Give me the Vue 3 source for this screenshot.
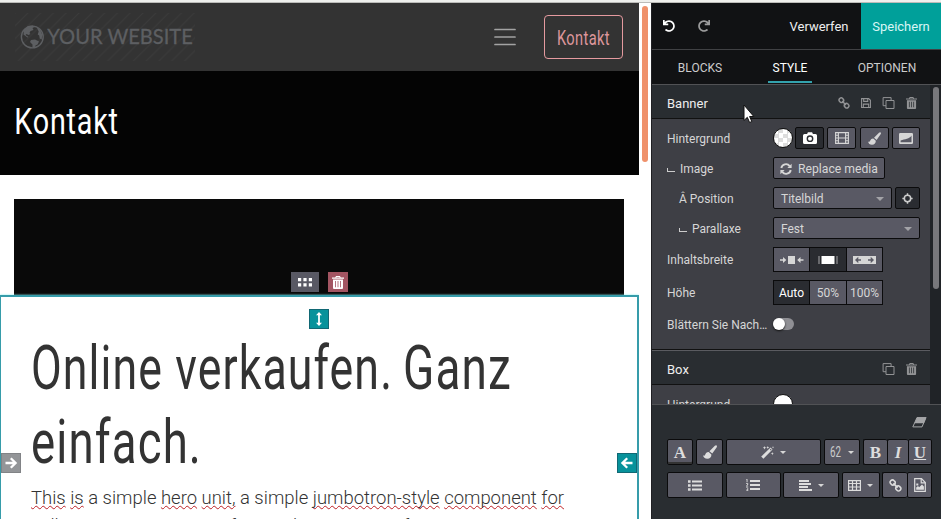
<script setup>
import { h } from 'vue'

const shapes = {
  undo: { box: '0 0 512 512', fill: ['M212.333 224.333H12c-6.627 0-12-5.373-12-12V12C0 5.373 5.373 0 12 0h48c6.627 0 12 5.373 12 12v78.112C117.773 39.279 184.26 7.47 258.175 8.007c136.906.994 246.448 111.623 246.157 248.532C504.041 393.258 393.12 504 256.333 504c-64.089 0-122.496-24.313-166.51-64.215-5.099-4.622-5.334-12.554-.467-17.42l33.967-33.967c4.474-4.474 11.662-4.717 16.401-.525C170.76 415.336 211.58 432 256.333 432c97.268 0 176-78.716 176-176 0-97.267-78.716-176-176-176-58.496 0-110.28 28.476-142.274 72.333h98.274c6.627 0 12 5.373 12 12v48c0 6.627-5.373 12-12 12z'] },
  link: { box: '0 0 14 14', line: ['M5.2 1.6 6.2 2.600a1.900 1.900 0 0 1 0 2.700l-.7.7a1.900 1.900 0 0 1-2.700 0L1.700 4.900a1.900 1.900 0 0 1 0-2.700l.7-.7a1.900 1.900 0 0 1 2.800.1z', 'M11.300 8 12.300 9a1.900 1.900 0 0 1 0 2.700l-.7.7a1.900 1.900 0 0 1-2.700 0L7.800 11.300a1.900 1.900 0 0 1 0-2.700l.7-.7a1.900 1.900 0 0 1 2.800.1z', 'M4.700 4.700 9.300 9.300'], w: 1.700 },
  save: { box: '0 0 12 12', line: ['M.7.7h8.500l2.100 2.100v8.500H.7z', 'M3.200.7v3.300h4.900V.7', 'M2.800 11.300V7.300h6.400v4'], w: 1.3 },
  copy: { box: '0 0 12 12', line: ['M3.500 3.500h8v8h-8z', 'M3.500 8.700H.6V.6h8v2.900'], w: 1 },
  trash: { box: '0 0 12 13', fill: ['M4 0h4l.7 1.6H12v1.200H0V1.600h3.300zM4.600 1l-.3.6h3.400L7.400 1zM1 3.400h10V12a1 1 0 0 1-1 1H2a1 1 0 0 1-1-1zM3.200 5v6.200h.8V5zm2.400 0v6.200h.8V5zM8 5v6.200h.8V5z'] },
  camera: { box: '0 0 14 12', fill: ['M1.5 2h2.600l.8-1.700h4.200L9.900 2h2.600A1.500 1.500 0 0 1 14 3.500v7A1.500 1.500 0 0 1 12.500 12h-11A1.500 1.500 0 0 1 0 10.500v-7A1.500 1.500 0 0 1 1.500 2zM7 3.300a3.400 3.400 0 1 0 0 6.800 3.400 3.400 0 0 0 0-6.800zM7 4.700a2 2 0 1 1 0 4 2 2 0 0 1 0-4z'] },
  film: { box: '0 0 14 12', line: ['M.6.6h12.800v10.800H.6z', 'M3.400.6v10.800M10.600.6v10.800M3.400 6h7.200M.6 3.300h2.800M.6 6h2.800M.6 8.700h2.800M10.600 3.300h2.800M10.600 6h2.800M10.600 8.700h2.800'], w: 1.1 },
  brush: { box: '0 0 13 13', fill: ['M12.600.4c.6.6.4 1.300 0 1.900L8.600 8 6 5.800 11 .8c.5-.5 1.100-.8 1.600-.4zM5.300 6.500l2.500 2.300c.2 2.200-1.400 4-3.800 4-2.200 0-3.700-1.300-3.900-3.300.8.6 1.500.5 1.900-.4.500-1.400 1.500-2.700 3.300-2.600z'] },
  contrast: { box: '0 0 14 11', fill: ['M1.200 0h11.600A1.200 1.200 0 0 1 14 1.200v8.600a1.200 1.200 0 0 1-1.200 1.200H1.200A1.200 1.200 0 0 1 0 9.800V1.200A1.200 1.200 0 0 1 1.200 0zM12.500 2.500 C10.500 6 6 6 1.600 7.600V9.300H12.500z'] },
  sync: { box: '0 0 12 12', line: ['M1.300 5A4.700 4.700 0 0 1 9.700 3.100', 'M10.700 7A4.700 4.700 0 0 1 2.300 8.900'], fill: ['M11.600.7v4.200H7.400z', 'M.4 11.300V7.100h4.200z'], w: 1.900 },
  target: { box: '0 0 12 12', line: ['M6 2.500a3.500 3.500 0 1 0 0 7 3.500 3.500 0 0 0 0-7z', 'M6 .4v3M6 8.600v3M.4 6h3M8.600 6h3'], w: 1.600 },
  narrow: { box: '0 0 24 8', fill: ['M8 0h7v8H8zM0 3.200h3V1L6.300 4 3 7V4.800H0zM23.500 3.200h-3V1l-3.300 3 3.300 3V4.800h3z'] },
  medium: { box: '0 0 20 8', fill: ['M3.500 0h13v8h-13z'], line: ['M1 0v8M19 0v8'], w: .6 },
  wide: { box: '0 0 23 8', fill: ['M0 0h23v8H0zM2 4l3.300 3.200V4.800H8V3.200H5.300V.8zM21 4 17.700.8v2.400H15v1.600h2.700v2.400z'] },
  eraser: { box: '0 0 15 11', line: ['M5 .6h9L10 9.900H.8z'], fill: ['M5 .3h9.400L12 6.300H2.400z'], w: 1 },
  wand: { box: '0 0 13 13', fill: ['M9.600 1.500l1.900 1.900L2.400 12.800.2 10.600zM8.900 3.600l.9.900.8-.9-.9-.9zM3.500 0l.5 1.300 1.300.5L4 2.300l-.5 1.300L3 2.300l-1.300-.5L3 1.300zM11.300 6l.4 1.200 1.200.4-1.200.4-.4 1.200-.4-1.200-1.200-.4 1.200-.4zM12 0l.3.900.9.3-.9.3-.3.900-.3-.9-.9-.3.900-.3zM6.800.1l.4 1 1 .4-1 .4-.4 1-.4-1-1-.4 1-.4z'] },
  ul: { box: '0 0 14 11', fill: ['M0 .3h2.600v2.400H0zM0 4.300h2.600v2.400H0zM0 8.300h2.600v2.400H0zM4 .6h10v1.800H4zM4 4.600h10v1.800H4zM4 8.600h10v1.800H4z'] },
  ol: { box: '0 0 14 12', fill: ['M1.500 0v3.300H.6V1H0V.5zM0 4.300h2.200v1.500L1.100 7h1.100v.6H0V7l1.200-1.300V5H0zM0 8.400h2.200V12H0v-.6h1.400v-.9H.4V10h1V9H0zM4 1h10v2H4zM4 5h10v2H4zM4 9h10v2H4z'] },
  align: { box: '0 0 13 11', fill: ['M0 0h10v2H0zM0 3h12v2H0zM0 6h9v2H0zM0 9h13v2H0z'] },
  table: { box: '0 0 13 11', line: ['M.6.6h11.800v9.800H.6zM.6 3.500h11.800M.6 7h11.800M4.500.6v9.800M8.500.6v9.800'], w: 1.200 },
  file: { box: '0 0 12 14', line: ['M.7.700h6.800L11.300 4.500v8.800H.7z', 'M7.200.9v4h4'], fill: ['M2.200 11.700V9.500L4 8l1.200 1.200L8 6.500l1.900 2v3.200z', 'M2.300 5.500h2v2h-2z'], w: 1.200 },
  dots: { box: '0 0 14 9', fill: ['M0 0h3.200v3.200H0zM5.400 0h3.200v3.200H5.400zM10.800 0H14v3.200h-3.200zM0 5.300h3.200v3.200H0zM5.400 5.300h3.200v3.200H5.400zM10.800 5.300H14v3.200h-3.200z'] },
  updown: { box: '0 0 8 14', fill: ['M4 0l3 3.300H4.900v7.400H7L4 14 1 10.700h2.100V3.300H1z'] },
  arrow: { box: '0 0 12 12', line: ['M.5 6h9.800M5.800 1.200 10.600 6l-4.800 4.800'], w: 2.300 }
}

const Icon = ({ name, w, h: height }) => {
  const s = shapes[name]
  return h('svg', { class: 'icon', viewBox: s.box, width: w, height: height, 'aria-hidden': 'true' }, [
    ...(s.line || []).map(d => h('path', { d, fill: 'none', stroke: 'currentColor', 'stroke-width': s.w })),
    ...(s.fill || []).map(d => h('path', { d, fill: 'currentColor', 'fill-rule': 'evenodd' }))
  ])
}
Icon.props = ['name', 'w', 'h']
</script>

<template>
  <div class="window">
    <div class="edge"></div>
    <div class="editor">
      <main class="page">
        <header class="nav">
          <svg class="logo" width="180" height="48" viewBox="0 0 180 48">
            <defs>
              <pattern id="stripes" width="12.800" height="12.800" patternUnits="userSpaceOnUse">
                <path d="M-1 13.800 13.800-1M-1 1 1-1M11.800 13.800l2-2" stroke="#3b3b3b" stroke-width="1" />
              </pattern>
            </defs>
            <rect width="180" height="48" fill="url(#stripes)" />
            <circle cx="17.300" cy="24" r="10.900" fill="none" stroke="#5d5f62" stroke-width="1.400" />
            <path d="M9 17l4-4 5-.5 1.500 1.500-2 1 1 2-3 1-1 2 1 1-2 1-2-1-1 1 3 2-1 .5-4-3zM16 27l4-.5 4 2-1.500 3-2 1-1 2.500-2-.5v-3l-2.500-2.500zM22 15l3 1.500 2.200 5-.5 5-2-1-.5-3-1.500-1 1-3z" fill="#5d5f62" />
            <text x="32.300" y="31" textLength="145.500" lengthAdjust="spacingAndGlyphs">YOUR WEBSITE</text>
          </svg>
          <svg class="burger" width="22" height="18" viewBox="0 0 22 18"><path d="M1 1.500h20M1 9h20M1 16.500h20" stroke="#a3a3a3" stroke-width="1.700" stroke-linecap="round" /></svg>
          <div class="contact">
            <svg width="54" height="26"><text x="0" y="21" textLength="53" lengthAdjust="spacingAndGlyphs">Kontakt</text></svg>
          </div>
        </header>
        <section class="hero">
          <svg width="120" height="50"><text x=".3" y="36" textLength="104.500" lengthAdjust="spacingAndGlyphs">Kontakt</text></svg>
        </section>
        <section class="cover">
          <button class="tool move"><Icon name="dots" w="14" h="9" /></button>
          <button class="tool remove"><Icon name="trash" w="12" h="13" /></button>
        </section>
        <section class="block">
          <svg class="title" width="540" height="149">
            <text x="-1" y="57.500" textLength="362" lengthAdjust="spacingAndGlyphs">Online verkaufen.</text>
            <text x="371" y="57.500" textLength="109" lengthAdjust="spacingAndGlyphs">Ganz</text>
            <text x="-1" y="131.500" textLength="171" lengthAdjust="spacingAndGlyphs">einfach.</text>
          </svg>
          <p><u>This</u> <u>is</u> a simple <u>hero</u> <u>unit,</u> a simple <u>jumbotron-style</u> <u>component</u> <u>for</u><br>calling extra attention to featured content or information.</p>
          <span class="handle top"><Icon name="updown" w="8" h="14" /></span>
          <span class="handle left"><Icon name="arrow" w="12" h="12" /></span>
          <span class="handle right"><Icon name="arrow" w="12" h="12" /></span>
        </section>
      </main>
      <div class="gutter"><i></i></div>
      <aside class="panel">
        <div class="actions">
          <button class="undo"><Icon name="undo" w="12" h="12" /></button>
          <button class="redo"><Icon name="undo" w="12" h="12" /></button>
          <button class="discard">Verwerfen</button>
          <button class="store">Speichern</button>
        </div>
        <nav class="tabs"><a class="t1">BLOCKS</a><a class="t2">STYLE</a><a class="t3">OPTIONEN</a></nav>
        <div class="options">
          <div class="list">
            <div class="head">
              <b>Banner</b>
              <Icon name="link" w="12" h="12" /><Icon name="save" w="10" h="10" /><Icon name="copy" w="13" h="12" /><Icon name="trash" w="11" h="12" />
            </div>
            <div class="rows">
              <div class="row"><label>Hintergrund</label>
                <span class="swatch checker"></span>
                <div class="media"><button class="on"><Icon name="camera" w="14" h="12" /></button><button><Icon name="film" w="14" h="12" /></button><button><Icon name="brush" w="13" h="13" /></button><button><Icon name="contrast" w="14" h="11" /></button></div>
              </div>
              <div class="row"><label><em></em>Image</label><button class="replace"><Icon name="sync" w="12" h="12" />Replace media</button></div>
              <div class="row"><label class="sub">Â Position</label><button class="select short">Titelbild<i class="caret"></i></button><button class="on aim"><Icon name="target" w="11" h="11" /></button></div>
              <div class="row"><label class="sub"><em></em>Parallaxe</label><button class="select long">Fest<i class="caret"></i></button></div>
              <div class="row tall"><label>Inhaltsbreite</label><div class="group"><button><Icon name="narrow" w="24" h="8" /></button><button class="on"><Icon name="medium" w="20" h="8" /></button><button><Icon name="wide" w="23" h="8" /></button></div></div>
              <div class="row tall"><label>Höhe</label><div class="group"><button class="on">Auto</button><button>50%</button><button>100%</button></div></div>
              <div class="row"><label>Blättern Sie Nach…</label><span class="switch"></span></div>
            </div>
            <div class="head second"><b>Box</b><Icon name="copy" w="13" h="12" /><Icon name="trash" w="11" h="12" /></div>
            <div class="rows next"><div class="row"><label>Hintergrund</label><span class="swatch"></span></div></div>
          </div>
          <div class="track"><i></i></div>
        </div>
        <div class="format">
          <div class="clear"><Icon name="eraser" w="15" h="11" /></div>
          <div class="bar one">
            <button class="serif color">A</button><button><Icon name="brush" w="14" h="14" /></button>
            <button><Icon name="wand" w="13" h="13" /><i class="caret"></i></button>
            <button class="size"><svg width="12" height="18"><text x="0" y="14" textLength="11" lengthAdjust="spacingAndGlyphs">62</text></svg><i class="caret"></i></button>
            <div class="joined biu"><button class="serif">B</button><button class="serif it">I</button><button class="serif un">U</button></div>
          </div>
          <div class="bar two">
            <button><Icon name="ul" w="14" h="11" /></button><button><Icon name="ol" w="14" h="12" /></button>
            <button><Icon name="align" w="13" h="11" /><i class="caret"></i></button>
            <button><Icon name="table" w="13" h="11" /><i class="caret"></i></button>
            <div class="joined lf"><button><Icon name="link" w="13" h="13" /></button><button><Icon name="file" w="12" h="14" /></button></div>
          </div>
        </div>
      </aside>
    </div>
    <svg class="pointer" width="12" height="20" viewBox="0 0 12 20"><path d="M1 1v15.500l3.300-3.200 2.300 5.200 2.200-1-2.200-5h4.200z" fill="#fff" stroke="#111" stroke-width="1" /></svg>
  </div>
</template>

<style>
body { overflow: hidden; }
</style>
<style scoped>
* { box-sizing: border-box; }
svg { overflow: visible; }
.window { position: relative; width: 941px; height: 519px; overflow: hidden; font: 12px Roboto, sans-serif; background: #fff; }
.edge { height: 3px; background: #eff0ed; border-bottom: 1px solid #bcbcb9; }
.editor { display: flex; height: 516px; }
button { font: inherit; color: #d6d6d6; padding: 0; margin: 0; border: 0; background: none; display: flex; align-items: center; justify-content: center; }
.icon { display: block; flex: none; }
.page { width: 639px; height: 516px; overflow: hidden; background: #fff; }
.nav { height: 68px; background: #333; display: flex; align-items: center; padding: 0 16px 0 15px; }
.logo text { font: 21px Lato, sans-serif; fill: #5d5f62; stroke: #5d5f62; stroke-width: .3px; }
.burger { margin-left: 299px; }
.contact { margin-left: auto; width: 79px; height: 44px; border: 1px solid #e59a9f; border-radius: 4px; display: flex; align-items: center; justify-content: center; }
.contact text { font: 19.500px Roboto, sans-serif; fill: #dd969b; letter-spacing: .5px; }
.hero { height: 104px; background: #040404; padding: 27px 14px; }
.hero text { font: 37px Roboto, sans-serif; fill: #fff; letter-spacing: 1px; }
.cover { margin: 24px 15px 0 14px; height: 96px; background: #090909; display: flex; justify-content: center; align-items: flex-end; gap: 9px; padding: 0 0 3px 1px; }
.tool { height: 20px; color: #fff; }
.move { width: 28px; background: #595964; }
.remove { width: 20px; background: #a35562; }
.block { position: relative; height: 240px; border: 2px solid #369caa; border-bottom: 0; border-left-width: 1px; padding: 34px 30px 0 31px; box-shadow: 0 0 2px #8ee; background: #fff; }
.title { display: block; }
.title text { font: 400 61px Roboto, sans-serif; fill: #333; letter-spacing: 1.500px; }
p { margin: 4px 0 0 -1px; font-size: 18.480px; font-weight: 300; line-height: 28px; color: #333; white-space: nowrap; }
u { text-decoration: underline wavy #bd2026 1px; text-underline-offset: 1px; text-decoration-skip-ink: none; }
.handle { position: absolute; width: 20px; height: 20px; display: flex; align-items: center; justify-content: center; color: #fff; background: #07929b; border: 1px solid #116874; }
.top { left: 308px; top: 12px; }
.left { left: 0; top: 156px; background: #939598; border-color: #818386; }
.right { right: 0; top: 156px; }
.right .icon { transform: scaleX(-1); }
.gutter { width: 12px; padding: 3px 0 0 3px; background: #fff; }
.gutter i { display: block; width: 6px; height: 156px; border-radius: 3px; background: #ef916b; }
.panel { width: 290px; height: 516px; background: #292d31; color: #d6d6d6; border-left: 1px solid #202024; }
.actions { height: 47px; background: #111214; display: flex; border-bottom: 1px solid #404144; }
.actions button { font-size: 13px; }
.undo { width: 33px; }
.actions .undo { color: #fff; }
.redo { width: 38px; }
.redo .icon { transform: scaleX(-1); opacity: .7; }
.actions .discard { margin-left: auto; width: 84px; color: #eee; }
.actions .store { width: 80px; height: 46px; background: #00a09a; color: #d8f6f5; }
.tabs { height: 35px; background: #111214; border-bottom: 1px solid #515255; display: flex; color: #ccc; line-height: 37px; }
.tabs a { text-align: center; }
.t1 { width: 96px; }
.t2 { width: 44px; margin: 0 36px 0 20px; color: #fff; border-bottom: 2px solid #33a2ad; height: 33px; }
.t3 { width: 78px; }
.options { height: 319px; display: flex; overflow: hidden; }
.list { width: 278px; }
.head { height: 34px; display: flex; align-items: center; background: #292d31; border-bottom: 1px solid #111; padding: 3px 13px 0 15px; gap: 11px; color: #929395; }
.head b { font-size: 13px; font-weight: 400; color: #eee; margin-right: auto; }
.head.second { border-top: 1px solid #5a5b60; height: 35px; }
.rows { height: 231px; background: #3e3f45; padding: 4px 0 0 15px; border-bottom: 1px solid #111; }
.rows.next { padding-top: 4px; height: 60px; }
.row { height: 30px; display: flex; align-items: center; }
.row.tall { height: 33px; }
.row label { width: 106px; white-space: nowrap; padding-top: 1px; }
.row .sub { padding-left: 12px; }
em { display: inline-block; width: 8px; height: 4px; border-left: 1px solid #ccc; border-bottom: 1px solid #ccc; margin-right: 5px; vertical-align: 1px; }
.row button, .bar button { border: 1px solid #0b0b0c; background: #595964; height: 22px; border-radius: 2px; }
.row button.on { background: #2a2c31; color: #fff; }
.swatch { width: 20px; height: 20px; background: #fff; border: 1px solid #111; border-radius: 50%; }
.checker { background: repeating-conic-gradient(#ddd 0 25%, #fff 0 50%) 0 0 / 9px 9px; }
.media { display: grid; grid-template-columns: 29px 29px 29px 28px; gap: 3.300px; margin-left: 2px; }
.row .replace { width: 112px; gap: 6px; font-size: 12.200px; padding-top: 1px; }
.row .select { justify-content: space-between; padding: 1px 7px 0; }
.select .caret { opacity: .6; }
.short { width: 119px; }
.long { width: 147px; }
.row .aim { width: 25px; margin-left: 3px; }
.row .aim .icon { color: #ccc; }
.caret { display: block; border: 4px solid transparent; border-top-color: #d6d6d6; border-bottom: 0; }
.group { display: grid; grid-template-columns: 36px 37px 37px; }
.row .group button { height: 25px; border-radius: 0; border-right-width: 0; }
.row .group button:last-child { border-right-width: 1px; }
.switch { width: 21px; height: 12px; border-radius: 6px; background: #8f8f94; display: flex; }
.switch::before { content: ''; width: 12px; height: 12px; border-radius: 50%; background: #fff; box-shadow: 0 1px 2px #111; }
.track { width: 11px; background: #202327; padding: 2px 0 0 3px; }
.track i { display: block; width: 6px; height: 202px; border-radius: 3px; background: #77777b; }
.format { height: 115px; border-top: 1px solid #515255; padding: 11px 8px 0 15px; }
.clear { height: 23px; display: flex; justify-content: flex-end; padding: 1px 6px 0 0; color: #a4a5a7; }
.bar { display: grid; height: 26px; gap: 3px; margin-bottom: 7px; }
.bar button { height: 26px; gap: 6px; color: #ddd; }
.one { grid-template-columns: 26px 27px 95px 36px 69px; }
.two { grid-template-columns: 56px 55px 56px 38px 50px; column-gap: 2.500px; }
.joined { display: grid; }
.biu { grid-template-columns: 24px 21px 24px; }
.lf { grid-template-columns: 25px 25px; }
.joined button:not(:last-child) { border-right: 0; }
.bar .caret { border-width: 3px; border-bottom: 0; }
.bar .serif { font: bold 17px "Liberation Serif", serif; padding-top: 1px; }
.bar .color { box-shadow: inset 0 -2px #333; }
.bar .it { font-style: italic; }
.bar .un { text-decoration: underline; }
.size text { font: 14px Roboto, sans-serif; fill: #ccc; }
.pointer { position: absolute; left: 743px; top: 104px; }
</style>
